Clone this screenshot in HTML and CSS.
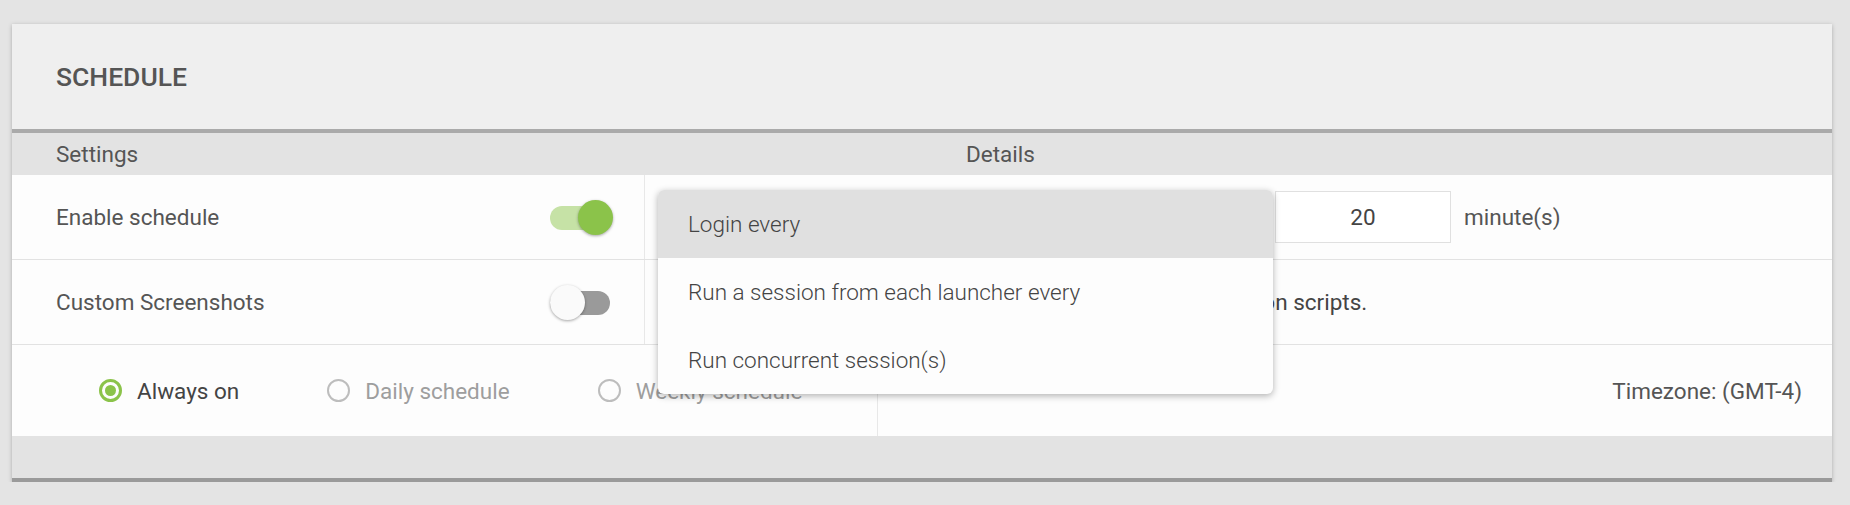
FILE: index.html
```
<!DOCTYPE html>
<html lang="en">
<head>
    <meta charset="UTF-8">
    <title>Schedule</title>
    <link rel="stylesheet" href="styles.css">
</head>
<body>
    <div class="panel">
        <div class="panel-head">
            <h2>SCHEDULE</h2>
        </div>

        <div class="cols-head">
            <span class="col-settings">Settings</span>
            <span class="col-details">Details</span>
        </div>

        <div class="row">
            <div class="setting">
                <span>Enable schedule</span>
                <span class="toggle on"><span class="track"></span><span class="knob"></span></span>
            </div>
            <div class="detail has-menu">
                <div class="select"></div>
                <input class="num" type="text" value="20">
                <span class="unit">minute(s)</span>

                <!-- open dropdown of the select -->
                <ul class="menu">
                    <li class="active">Login every</li>
                    <li>Run a session from each launcher every</li>
                    <li>Run concurrent session(s)</li>
                </ul>
            </div>
        </div>

        <div class="row">
            <div class="setting">
                <span>Custom Screenshots</span>
                <span class="toggle"><span class="track"></span><span class="knob"></span></span>
            </div>
            <div class="detail text">Allow custom screenshots to be captured by your automation scripts.</div>
        </div>

        <div class="row row-mode">
            <div class="modes">
                <label class="radio checked"><span class="dot"></span>Always on</label>
                <label class="radio disabled"><span class="dot"></span>Daily schedule</label>
                <label class="radio disabled"><span class="dot"></span>Weekly schedule</label>
            </div>
            <div class="tz">Timezone: (GMT-4)</div>
        </div>

        <div class="panel-foot"></div>
    </div>
</body>
</html>
```

FILE: styles.css
```
* {
    box-sizing: border-box;
    margin: 0;
    padding: 0;
}

body {
    background: #e4e4e4;
    font-family: 'Roboto', 'Liberation Sans', sans-serif;
    font-size: 22.5px;
    color: #555;
    padding: 24px 18px 0 12px;
}

.panel {
    width: 1820px;
    background: #fdfdfd;
    box-shadow: 0 1px 4px rgba(0, 0, 0, 0.25);
}

.panel-head {
    height: 109px;
    background: #efefef;
    border-bottom: 4px solid #aaa;
    display: flex;
    align-items: center;
    padding-left: 44px;
}

.panel-head h2 {
    font-size: 26.5px;
    font-weight: 500;
    color: #555;
}

.cols-head {
    height: 42px;
    background: #e3e3e3;
    display: flex;
    align-items: center;
}

.col-settings {
    width: 633px;
    padding-left: 44px;
}

.col-details {
    padding-left: 321px;
}

.row {
    display: flex;
    height: 85px;
    border-bottom: 1px solid #e2e2e2;
}

.setting {
    width: 633px;
    border-right: 1px solid #e8e8e8;
    display: flex;
    align-items: center;
    justify-content: space-between;
    padding: 0 31px 0 44px;
}

.detail {
    flex: 1;
    display: flex;
    align-items: center;
}

.has-menu {
    position: relative;
    padding-left: 13px;
}

.text {
    padding-left: 30px;
    color: #444;
}

/* toggle switch */
.toggle {
    position: relative;
    width: 63px;
    height: 35px;
}

.toggle .track {
    position: absolute;
    left: 0;
    right: 3px;
    top: 6px;
    height: 24px;
    border-radius: 12px;
    background: #9a9a9a;
}

.toggle.on .track {
    background: #c6e2a6;
}

.toggle .knob {
    position: absolute;
    top: 0;
    left: 0;
    width: 35px;
    height: 35px;
    border-radius: 50%;
    background: #fafafa;
    box-shadow: 0 1px 3px rgba(0, 0, 0, 0.35);
}

.toggle.on .knob {
    left: auto;
    right: 0;
    background: #8bc34a;
}

.select {
    width: 615px;
    height: 52px;
}

.num {
    width: 176px;
    height: 52px;
    margin-left: 2px;
    border: 1px solid #e0e0e0;
    background: #fff;
    font: inherit;
    color: #444;
    text-align: center;
    outline: none;
}

.unit {
    margin-left: 13px;
    color: #555;
}

.menu {
    position: absolute;
    top: 15px;
    left: 13px;
    width: 615px;
    list-style: none;
    background: #fdfdfd;
    border-radius: 6px;
    overflow: hidden;
    box-shadow: 0 2px 7px rgba(0, 0, 0, 0.3);
    z-index: 2;
}

.menu li {
    height: 68px;
    line-height: 68px;
    padding-left: 30px;
    font-weight: 300;
    color: #444;
}

.menu li.active {
    background: #e0e0e0;
}

/* run mode row */
.row-mode {
    height: 91px;
    border-bottom: none;
}

.modes {
    width: 866px;
    border-right: 1px solid #e8e8e8;
    display: flex;
    align-items: center;
    gap: 88px;
    padding-left: 87px;
}

.radio {
    display: flex;
    align-items: center;
    gap: 15px;
    color: #444;
}

.radio .dot {
    width: 23px;
    height: 23px;
    border-radius: 50%;
    border: 2px solid #bdbdbd;
    display: flex;
    align-items: center;
    justify-content: center;
}

.radio.checked .dot {
    border: 3px solid #8bc34a;
}

.radio.checked .dot::after {
    content: "";
    width: 11px;
    height: 11px;
    border-radius: 50%;
    background: #8bc34a;
}

.radio.disabled {
    color: #9e9e9e;
}

.tz {
    flex: 1;
    display: flex;
    align-items: center;
    justify-content: flex-end;
    padding-right: 30px;
}

.panel-foot {
    height: 46px;
    background: #e3e3e3;
    border-bottom: 4px solid #9a9a9a;
}
```
